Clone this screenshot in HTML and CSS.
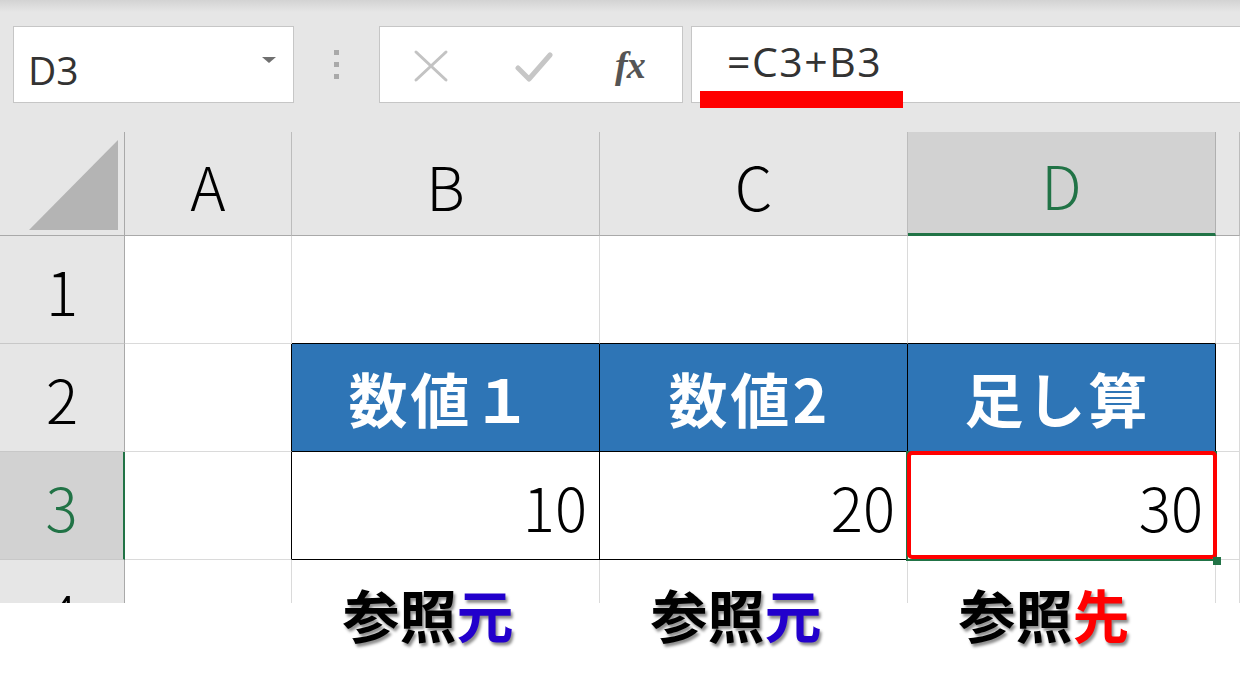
FILE: index.html
```html
<!DOCTYPE html>
<html lang="ja">
<head>
  <meta charset="UTF-8" />
  <title>参照元と参照先</title>
  <meta name="viewport" content="width=device-width, initial-scale=1" />
  <link rel="stylesheet" href="styles.css">
</head>
<body>
  <div class="toolbar">
    <div class="namebox">
      <span class="ref">D3</span>
      <span class="caret"></span>
    </div>
    <div class="grip"><i></i><i></i><i></i></div>
    <div class="btns">
      <svg class="cancel" width="36" height="34" viewBox="0 0 36 34">
        <path d="M3 3 L33 31 M33 3 L3 31" stroke="#c3c3c3" stroke-width="3" fill="none" stroke-linecap="round"/>
      </svg>
      <svg class="enter" width="38" height="32" viewBox="0 0 38 32">
        <path d="M3 17 L14 28 L35 4" stroke="#c6c6c6" stroke-width="5" fill="none" stroke-linejoin="round" stroke-linecap="round"/>
      </svg>
      <span class="fx">fx</span>
    </div>
    <div class="formula">
      <span class="expr">=C3+B3</span>
      <span class="mark"></span>
    </div>
  </div>

  <div class="sheet">
    <div class="grid">
      <div class="corner">
        <svg width="124" height="103" viewBox="0 0 124 103">
          <polygon points="118,8 118,98 29,98" fill="#b4b4b4"/>
        </svg>
      </div>
      <div class="colh">A</div>
      <div class="colh">B</div>
      <div class="colh">C</div>
      <div class="colh active">D</div>
      <div class="colh"></div>

      <div class="rowh">1</div>
      <div class="cell"></div>
      <div class="cell above"></div>
      <div class="cell above"></div>
      <div class="cell above"></div>
      <div class="cell"></div>

      <div class="rowh">2</div>
      <div class="cell edge"></div>
      <div class="cell head">数値１</div>
      <div class="cell head">数値2</div>
      <div class="cell head">足し算</div>
      <div class="cell"></div>

      <div class="rowh active">3</div>
      <div class="cell edge"></div>
      <div class="cell val">10</div>
      <div class="cell val">20</div>
      <div class="cell val picked">30<span class="handle"></span></div>
      <div class="cell"></div>

      <div class="rowh">4</div>
      <div class="cell"></div>
      <div class="cell"></div>
      <div class="cell"></div>
      <div class="cell"></div>
      <div class="cell"></div>
    </div>
  </div>

  <div class="notes">
    <div></div>
    <div></div>
    <div class="note">参照<span class="src">元</span></div>
    <div class="note">参照<span class="src">元</span></div>
    <div class="note">参照<span class="dst">先</span></div>
  </div>
</body>
</html>
```

FILE: styles.css
```css
:root {
  --ui-bg: #e6e6e6;
  --ui-sel: #d2d2d2;
  --green: #217346;
  --blue: #2e75b6;
  --grid: #dadada;
  --frame: #c6c6c6;
}
html, body {
  margin: 0;
  padding: 0;
  background: #fff;
  width: 1240px;
  height: 695px;
  overflow: hidden;
}
body {
  font-family: "Noto Sans CJK JP", "Noto Sans", sans-serif;
  color: #000;
}

/* formula bar */
.toolbar {
  height: 132px;
  box-sizing: border-box;
  padding: 26px 0 0 13px;
  background: linear-gradient(#d3d3d3 0, #e6e6e6 12px, #e6e6e6 100%);
  display: flex;
  align-items: flex-start;
}
.namebox, .btns, .formula {
  height: 77px;
  box-sizing: border-box;
  background: #fff;
  border: 1px solid var(--frame);
  display: flex;
  align-items: center;
}
.namebox {
  width: 281px;
  padding: 0 17px 0 14px;
  justify-content: space-between;
}
.ref {
  font-family: "Open Sans", "Noto Sans", sans-serif;
  font-size: 39px;
  color: #333;
  margin-top: 9px;
}
.caret {
  width: 0;
  height: 0;
  border-left: 7px solid transparent;
  border-right: 7px solid transparent;
  border-top: 6px solid #707070;
  margin-top: -10px;
}
.grip {
  width: 85px;
  height: 77px;
  display: flex;
  flex-direction: column;
  align-items: center;
  justify-content: center;
  gap: 7px;
}
.grip i {
  display: block;
  width: 5px;
  height: 5px;
  background: #a9a9a9;
}
.btns {
  width: 304px;
  padding: 0 0 0 33px;
  gap: 0;
}
.cancel { margin-right: 66px; margin-top: 2px; }
.enter { margin-right: 62px; margin-top: 4px; }
.fx {
  font-family: "Liberation Serif", "DejaVu Serif", serif;
  font-style: italic;
  font-weight: bold;
  font-size: 38px;
  color: #555;
  letter-spacing: -1px;
}
.formula {
  flex: 1;
  margin-left: 8px;
  margin-right: -4px;
  padding-left: 35px;
  position: relative;
}
.expr {
  font-family: "Open Sans", "Noto Sans", sans-serif;
  font-size: 41px;
  letter-spacing: 1.5px;
  color: #333;
  margin-top: -8px;
}
.mark {
  position: absolute;
  left: 8px;
  top: 64px;
  width: 203px;
  height: 17px;
  background: #ff0000;
}

/* worksheet */
.sheet {
  height: 471px;
  overflow: hidden;
}
.grid {
  display: grid;
  grid-template-columns: 125px 167px 308px 308px 308px 24px;
  grid-template-rows: 104px 108px 108px 108px 108px;
}
.grid > div {
  box-sizing: border-box;
  display: flex;
  align-items: center;
}
.corner {
  background: var(--ui-bg);
  border-right: 1px solid #a9a9a9;
  border-bottom: 1px solid #a9a9a9;
}
.colh {
  background: var(--ui-bg);
  border-right: 1px solid #bcbcbc;
  border-bottom: 1px solid #a9a9a9;
  justify-content: center;
  font-size: 60px;
  font-weight: 300;
  padding-top: 2px;
}
.colh.active {
  background: var(--ui-sel);
  color: var(--green);
  border-bottom: 3px solid var(--green);
  border-right-color: #b0b0b0;
}
.rowh {
  background: var(--ui-bg);
  border-right: 1px solid #a9a9a9;
  border-bottom: 1px solid #c8c8c8;
  justify-content: center;
  font-size: 60px;
  font-weight: 300;
}
.rowh.active {
  background: var(--ui-sel);
  color: var(--green);
  border-right: 2px solid var(--green);
}
.cell {
  background: #fff;
  border-right: 1px solid var(--grid);
  border-bottom: 1px solid var(--grid);
}
.cell.above { border-bottom-color: #000; }
.cell.edge { border-right-color: #000; }
.cell.head {
  background: var(--blue);
  border-right-color: #000;
  border-bottom-color: #000;
  color: #fff;
  font-weight: bold;
  font-size: 59px;
  letter-spacing: 3px;
  justify-content: center;
  padding-right: 8px;
}
.cell.val {
  border-right-color: #000;
  border-bottom-color: #000;
  justify-content: flex-end;
  padding-right: 12px;
  font-size: 60px;
  font-weight: 300;
}
.cell.picked { position: relative; }
.cell.picked::before {
  content: "";
  position: absolute;
  inset: -1px -2px -2px -2px;
  border: 2px solid var(--green);
}
.cell.picked::after {
  content: "";
  position: absolute;
  inset: -1px -2px 0 -1px;
  border: 4px solid #ff0000;
  border-radius: 5px;
}
.handle {
  position: absolute;
  right: -6px;
  bottom: -6px;
  width: 8px;
  height: 8px;
  background: var(--green);
  z-index: 1;
}

/* annotations */
.notes {
  display: grid;
  grid-template-columns: 125px 167px 308px 308px 308px;
  margin-top: -30px;
  position: relative;
}
.note {
  height: 80px;
  line-height: 80px;
  text-align: center;
  padding-right: 36px;
  font-size: 57px;
  font-weight: bold;
  text-shadow: 2px 3px 3px rgba(0, 0, 0, 0.45);
}
.src { color: #2200cc; }
.dst { color: #ff0000; }
```
